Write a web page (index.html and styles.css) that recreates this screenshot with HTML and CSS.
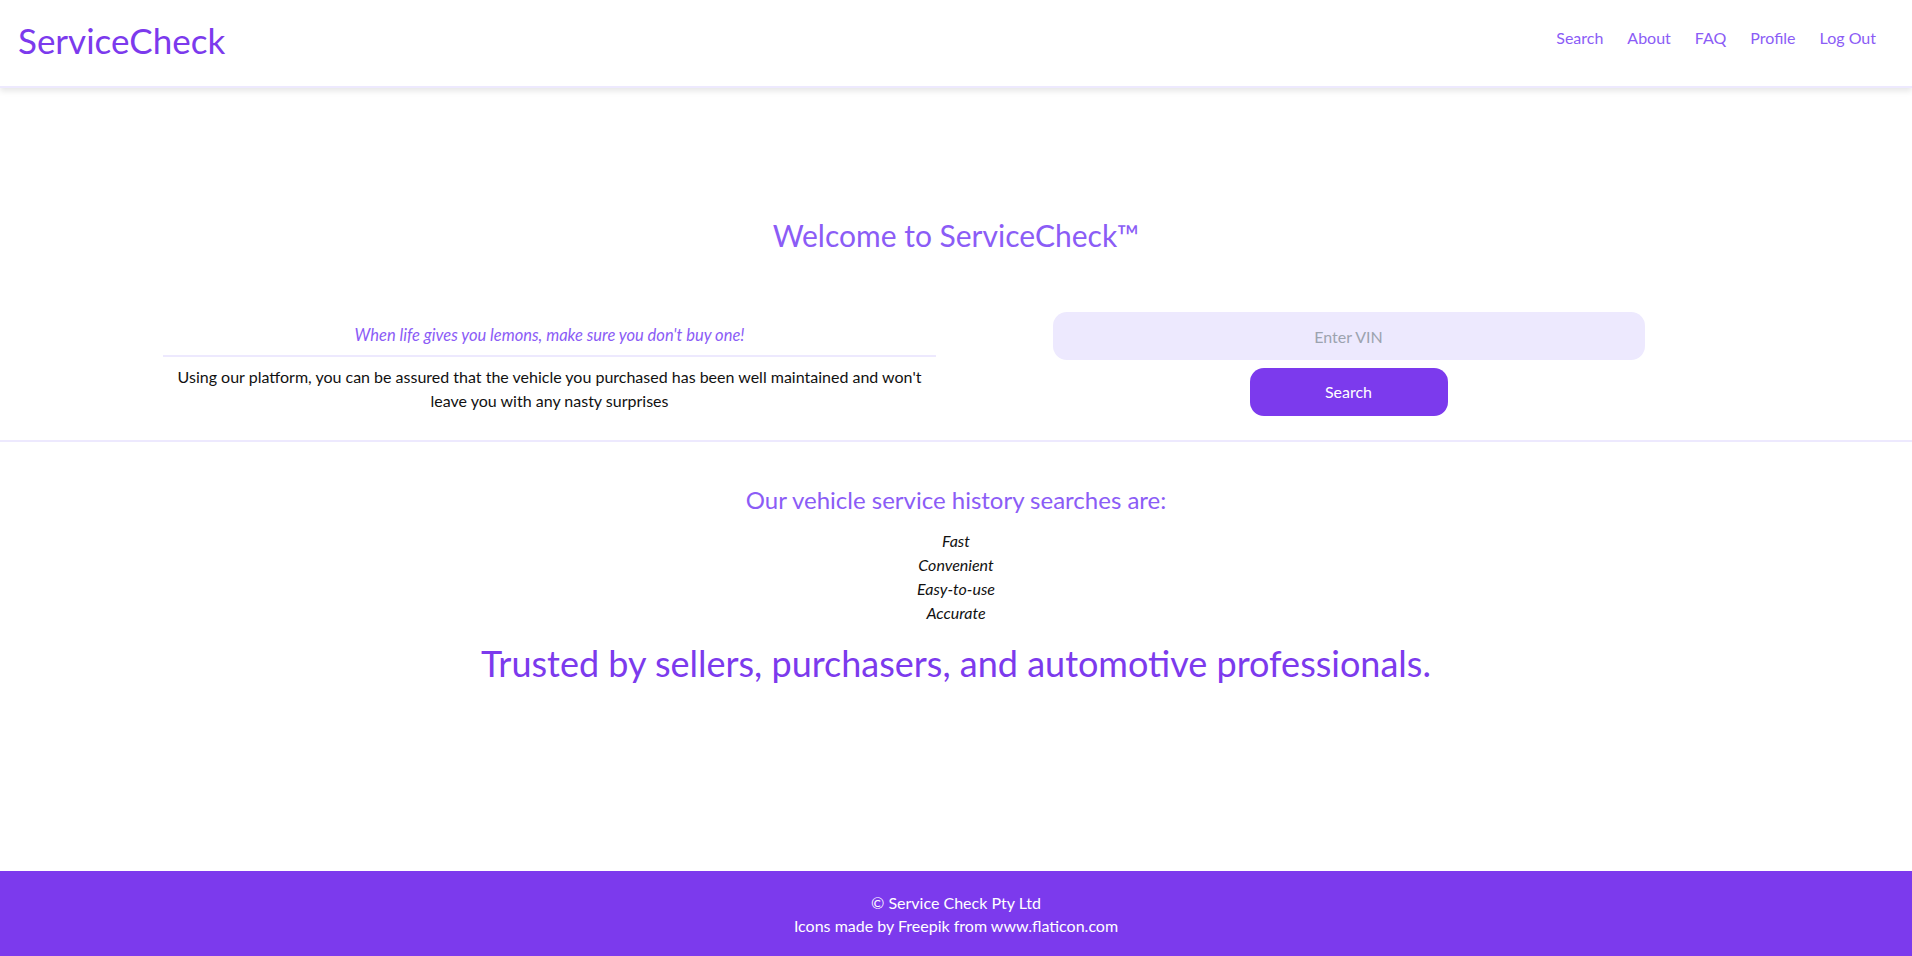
FILE: index.html
```html
<!DOCTYPE html>
<html lang="en">
<head>
<meta charset="utf-8">
<title>ServiceCheck</title>
<link rel="stylesheet" href="styles.css">
</head>
<body>
<header class="topbar">
  <a class="logo" href="#">ServiceCheck</a>
  <nav class="nav">
    <a href="#">Search</a>
    <a href="#">About</a>
    <a href="#">FAQ</a>
    <a href="#">Profile</a>
    <a href="#">Log Out</a>
  </nav>
</header>
<main class="main">
  <section class="hero">
    <h1 class="welcome">Welcome to ServiceCheck™</h1>
    <div class="hero-row">
      <div class="intro">
        <p class="quote">When life gives you lemons, make sure you don't buy one!</p>
        <hr class="intro-rule">
        <p class="blurb">Using our platform, you can be assured that the vehicle you purchased has been well maintained and won't leave you with any nasty surprises</p>
      </div>
      <form class="search" onsubmit="return false">
        <input class="vin" type="text" placeholder="Enter VIN">
        <button class="search-btn" type="submit">Search</button>
      </form>
    </div>
  </section>
  <hr class="section-rule">
  <section class="features">
    <h2 class="features-title">Our vehicle service history searches are:</h2>
    <ul class="feature-list">
      <li>Fast</li>
      <li>Convenient</li>
      <li>Easy-to-use</li>
      <li>Accurate</li>
    </ul>
    <p class="trusted">Trusted by sellers, purchasers, and automotive professionals.</p>
  </section>
</main>
<footer class="footer">
  <p>© Service Check Pty Ltd</p>
  <p>Icons made by Freepik from www.flaticon.com</p>
</footer>
</body>
</html>
```
FILE: styles.css
```css
* { box-sizing: border-box; }
html, body { margin: 0; padding: 0; }
body {
  font-family: Lato, "Open Sans", sans-serif;
  font-size: 16px;
  line-height: 24px;
  color: #111;
  background: #fff;
  min-height: 100vh;
  display: flex;
  flex-direction: column;
}
a { text-decoration: none; }

.topbar {
  height: 88px;
  display: flex;
  align-items: flex-start;
  justify-content: space-between;
  padding: 16px 24px 0 16px;
  border-bottom: 2px solid #ede9fe;
  box-shadow: 0 3px 6px rgba(0,0,0,0.1);
  position: relative;
  z-index: 1;
}
.logo {
  color: #7c3aed;
  font-size: 35px;
  line-height: 48px;
  margin-left: 2px;
}
.nav { display: flex; padding-top: 10px; }
.nav a {
  color: #8b5cf6;
  font-size: 16px;
  padding: 0 12px;
}

.main { flex: 1; }
.hero { padding-top: 129px; }
.welcome {
  margin: 0;
  text-align: center;
  font-weight: normal;
  font-size: 30px;
  line-height: 36px;
  color: #8b5cf6;
}
.hero-row {
  margin-top: 59px;
  display: grid;
  grid-template-columns: 799px 799px;
  align-items: center;
  padding-left: 150px;
}
.intro {
  padding: 8px 13px 0;
  text-align: center;
}
.quote {
  margin: 0;
  color: #8b5cf6;
  font-style: italic;
  font-size: 16.5px;
}
.intro-rule {
  border: 0;
  height: 2px;
  background: #ede9fe;
  margin: 8px 0;
}
.blurb { margin: 0; }

.search {
  display: flex;
  flex-direction: column;
  align-items: center;
  gap: 8px;
}
.vin {
  width: 592px;
  height: 48px;
  border: 0;
  border-radius: 14px;
  background: #ede9fe;
  text-align: center;
  font: inherit;
  color: #111;
  outline: none;
}
.vin::placeholder { color: #9ca3af; }
.search-btn {
  width: 198px;
  height: 48px;
  border: 0;
  border-radius: 14px;
  background: #7c3aed;
  color: #fff;
  font: inherit;
}

.section-rule {
  border: 0;
  height: 2px;
  background: #ede9fe;
  margin: 24px 0 0;
}
.features {
  text-align: center;
  padding-top: 40px;
}
.features-title {
  margin: 0;
  font-weight: normal;
  font-size: 24px;
  line-height: 36px;
  color: #8b5cf6;
}
.feature-list {
  list-style: none;
  margin: 11px 0 0;
  padding: 0;
  font-style: italic;
}
.trusted {
  margin: 18px 0 0;
  font-size: 36px;
  line-height: 40px;
  color: #7c3aed;
}

.footer {
  background: #7c3aed;
  color: #fff;
  text-align: center;
  height: 85px;
  padding-top: 20px;
}
.footer p { margin: 0; line-height: 23px; }
```
